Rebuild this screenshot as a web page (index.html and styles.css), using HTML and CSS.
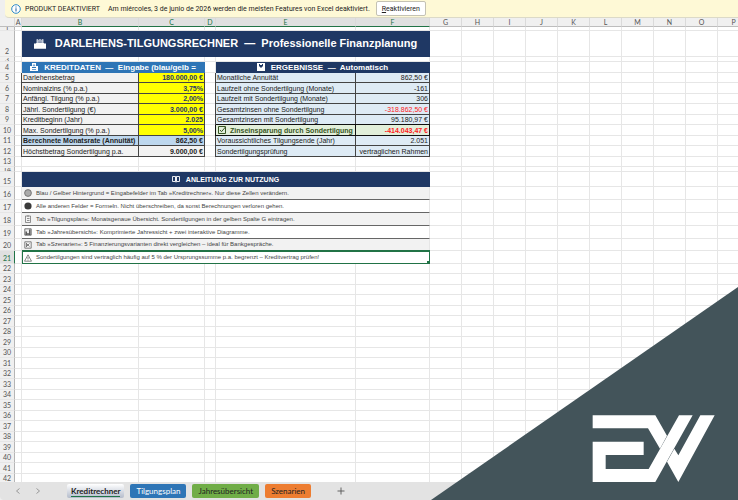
FILE: index.html
```html
<!DOCTYPE html>
<html lang="de">
<head>
  <meta charset="UTF-8">
  <meta name="viewport" content="width=device-width, initial-scale=1.0">
  <title>Darlehens-Tilgungsrechner</title>
  <link rel="stylesheet" href="styles.css">
</head>
<body>
  <div class="notice">
    <svg class="info" viewBox="0 0 10 10"><circle cx="5" cy="5" r="4.3" fill="#fff" stroke="#2b88c8" stroke-width="1"/><path d="M5 4.3v3.2M5 2.4v1.1" stroke="#2b6ca8" stroke-width="1.1"/></svg>
    <strong>PRODUKT DEAKTIVIERT</strong>
    <span>Am miércoles, 3 de junio de 2026 werden die meisten Features von Excel deaktiviert.</span>
    <button type="button"><u>R</u>eaktivieren</button>
  </div>

  <main class="sheet">
    <table id="grid">
      <colgroup id="cols">
        <col class="w-num"><col class="w-a"><col class="w-b"><col class="w-c"><col class="w-d"><col class="w-e"><col class="w-f">
      </colgroup>
      <thead>
        <tr id="letters"><th class="corner"></th><th>A</th><th class="sel">B</th><th class="sel">C</th><th class="sel">D</th><th class="sel">E</th><th class="sel">F</th></tr>
      </thead>
      <tbody>
        <tr class="h4"><th><div class="clip">1</div></th><td></td><td></td><td></td><td></td><td></td><td></td></tr>
        <tr class="h26"><th class="low">2</th><td></td>
          <td colspan="5" class="title"><div class="line">
            <svg class="icon-lg" viewBox="0 0 14 12"><path d="M0 6h2l1-1h8l1 1h2v6H0z" fill="#fff"/><path d="M3 1h2v1h1V1h2v1h1V1h2v4H3z" fill="#dfe5ef"/><path d="M4 3h6M5 4.4h4" stroke="#1f3864" stroke-width=".6"/></svg>
            <span>DARLEHENS-TILGUNGSRECHNER&nbsp; —&nbsp; Professionelle Finanzplanung</span>
          </div></td></tr>
        <tr class="h5"><th><div class="clip">3</div></th><td></td><td></td><td></td><td></td><td></td><td></td></tr>
        <tr class="h11"><th>4</th><td></td>
          <td colspan="2" class="head wide blue"><div class="line">
            <svg class="icon" viewBox="0 0 8 8"><path d="M0 3h2v2h4V3h2v5H0z" fill="#fff"/><path d="M2 0h4v4H2z" fill="#fff"/><path d="M4 1v2M3 2.200l1 1 1-1M2 6.500h4" fill="none" stroke="#2e75b6" stroke-width=".7"/></svg>
            <span>KREDITDATEN&nbsp; —&nbsp; Eingabe (blau/gelb =</span>
          </div></td><td></td>
          <td colspan="2" class="head wide"><div class="line">
            <svg class="icon" viewBox="0 0 8 8"><path d="M0 0h8v8H0z" fill="#fff"/><path d="M2 1h1v1h2V1h1v2L4 5 2 3z" fill="#1f3864"/></svg>
            <span>ERGEBNISSE&nbsp; —&nbsp; Automatisch</span>
          </div></td></tr>
        <tr class="h10"><th>5</th><td></td><td class="key">Darlehensbetrag</td><td class="input">180.000,00 €</td><td></td><td class="res">Monatliche Annuität</td><td class="res num">862,50 €</td></tr>
        <tr class="h11"><th>6</th><td></td><td class="key">Nominalzins (% p.a.)</td><td class="input">3,75%</td><td></td><td class="res">Laufzeit ohne Sondertilgung (Monate)</td><td class="res num">-161</td></tr>
        <tr class="h10"><th>7</th><td></td><td class="key">Anfängl. Tilgung (% p.a.)</td><td class="input">2,00%</td><td></td><td class="res">Laufzeit mit Sondertilgung (Monate)</td><td class="res num">306</td></tr>
        <tr class="h11"><th>8</th><td></td><td class="key">Jährl. Sondertilgung (€)</td><td class="input">3.000,00 €</td><td></td><td class="res">Gesamtzinsen ohne Sondertilgung</td><td class="res num neg">-318.862,50 €</td></tr>
        <tr class="h10"><th>9</th><td></td><td class="key">Kreditbeginn (Jahr)</td><td class="input">2.025</td><td></td><td class="res">Gesamtzinsen mit Sondertilgung</td><td class="res num">95.180,97 €</td></tr>
        <tr class="h11"><th>10</th><td></td><td class="key">Max. Sondertilgung (% p.a.)</td><td class="input">5,00%</td><td></td>
          <td class="saving"><div class="line">
            <svg class="icon" viewBox="0 0 8 8"><path d="M.5.500h7v7h-7zM2 4l1.500 1.700L7.500 1" fill="none" stroke="#375623" stroke-width="1"/></svg>
            <span>Zinseinsparung durch Sondertilgung</span>
          </div></td><td class="saving num neg">-414.043,47 €</td></tr>
        <tr class="h10"><th>11</th><td></td><td class="key rate">Berechnete Monatsrate (Annuität)</td><td class="key rate num">862,50 €</td><td></td><td class="res">Voraussichtliches Tilgungsende (Jahr)</td><td class="res num">2.051</td></tr>
        <tr class="h11"><th>12</th><td></td><td class="key">Höchstbetrag Sondertilgung p.a.</td><td class="key num strong">9.000,00 €</td><td></td><td class="res">Sondertilgungsprüfung</td><td class="res num">vertraglichen Rahmen</td></tr>
        <tr class="h10"><th>13</th><td></td><td></td><td></td><td></td><td></td><td></td></tr>
        <tr class="h5"><th><div class="clip">14</div></th><td></td><td></td><td></td><td></td><td></td><td></td></tr>
        <tr class="h15"><th class="low">15</th><td></td>
          <td colspan="5" class="head"><div class="line">
            <svg class="icon" viewBox="0 0 8 8"><path d="M.5 1.500h3v5h-3zM4.500 1.500h3v5h-3zM4 1.500v6" fill="none" stroke="#fff" stroke-width=".9"/></svg>
            <span>ANLEITUNG ZUR NUTZUNG</span>
          </div></td></tr>
        <tr class="h13"><th class="low">16</th><td></td><td colspan="5" class="hint shade"><div class="line">
          <svg class="icon" viewBox="0 0 8 8"><circle cx="4" cy="4" r="3.400" fill="#aaa" stroke="#666" stroke-width=".8"/></svg>
          <span>Blau / Gelber Hintergrund = Eingabefelder im Tab »Kreditrechner«. Nur diese Zellen verändern.</span></div></td></tr>
        <tr class="h13"><th class="low">17</th><td></td><td colspan="5" class="hint"><div class="line">
          <svg class="icon" viewBox="0 0 8 8"><circle cx="4" cy="4" r="3.600" fill="#3a3a3a"/></svg>
          <span>Alle anderen Felder = Formeln. Nicht überschreiben, da sonst Berechnungen verloren gehen.</span></div></td></tr>
        <tr class="h13"><th class="low">18</th><td></td><td colspan="5" class="hint shade"><div class="line">
          <svg class="icon" viewBox="0 0 8 8"><path d="M1.500 1h5v6.500h-5zM3 1h2M3 3.500h2.500M3 5.500h2.500" fill="none" stroke="#777" stroke-width=".8"/></svg>
          <span>Tab »Tilgungsplan«: Monatsgenaue Übersicht. Sondertilgungen in der gelben Spalte G eintragen.</span></div></td></tr>
        <tr class="h13"><th class="low">19</th><td></td><td colspan="5" class="hint"><div class="line">
          <svg class="icon" viewBox="0 0 8 8"><path d="M.8.800h6.400v6.400H.8z" fill="#eee" stroke="#555" stroke-width=".8"/><path d="M2.200 7V3.500M4 7V5M5.800 7V1.500" stroke="#444" stroke-width="1.300"/></svg>
          <span>Tab »Jahresübersicht«: Komprimierte Jahressicht + zwei interaktive Diagramme.</span></div></td></tr>
        <tr class="h12"><th class="low">20</th><td></td><td colspan="5" class="hint shade"><div class="line">
          <svg class="icon" viewBox="0 0 8 8"><path d="M.8.800h6.400v6.400H.8zM2.500 2.500l3 3M5.500 2.500l-3 3M2.500 2v4" fill="none" stroke="#666" stroke-width=".8"/></svg>
          <span>Tab »Szenarien«: 5 Finanzierungsvarianten direkt vergleichen – ideal für Bankgespräche.</span></div></td></tr>
        <tr class="h13"><th class="low sel">21</th><td></td><td colspan="5" class="hint active"><div class="line">
          <svg class="icon" viewBox="0 0 8 8"><path d="M4 .8L7.500 7.200h-7zM4 3v2.200M4 5.700v.8" fill="none" stroke="#555" stroke-width=".7"/></svg>
          <span>Sondertilgungen sind vertraglich häufig auf 5 % der Ursprungssumme p.a. begrenzt – Kreditvertrag prüfen!</span></div></td></tr>
      </tbody>
    </table>
  </main>

  <nav class="tabs">
    <button type="button" class="arrow" aria-label="Zurück"><svg viewBox="0 0 6 8"><path d="M4.500 1.500L1.500 4l3 2.500" fill="none" stroke="#999"/></svg></button>
    <button type="button" class="arrow" aria-label="Weiter"><svg viewBox="0 0 6 8"><path d="M1.500 1.500l3 2.500-3 2.500" fill="none" stroke="#999"/></svg></button>
    <button type="button" class="tab current"><span>Kreditrechner</span></button>
    <button type="button" class="tab plan">Tilgungsplan</button>
    <button type="button" class="tab year">Jahresübersicht</button>
    <button type="button" class="tab scen">Szenarien</button>
    <button type="button" class="add" aria-label="Neues Blatt"><svg viewBox="0 0 8 8"><path d="M4 .5v7M.5 4h7" stroke="#555" stroke-width=".9"/></svg></button>
  </nav>

  <svg class="brand" viewBox="0 0 307 213">
    <path d="M307 0v213H0z" fill="#43545a"/>
    <g transform="translate(139 103) scale(.33333)" fill="#fff">
      <path d="M68 76H256L291 137 270 176 234 115H68z"/>
      <path d="M68 155H221V195H107V237H236L327 76H368L256 276H68z"/>
      <path d="M391 76H434L325 276 291 215 313 176 325 196z"/>
    </g>
  </svg>

  <script>
    const sheet = document.querySelector(".sheet");
    const grid = document.getElementById("grid");
    const body = grid.tBodies[0];

    // free columns from G on, as many as the window shows
    const count = Math.min(20, Math.max(0, Math.ceil((sheet.clientWidth - 430) / 32)));
    for (let i = 0; i < count; i++) {
      const col = document.createElement("col");
      col.className = "w-rest";
      document.getElementById("cols").appendChild(col);
      const th = document.createElement("th");
      th.textContent = String.fromCharCode(71 + i);
      document.getElementById("letters").appendChild(th);
    }

    for (const row of body.rows) {
      for (let i = 0; i < count; i++) row.insertCell();
    }

    // blank rows below the calculator
    for (let n = 22; grid.offsetHeight < sheet.clientHeight; n++) {
      const row = body.insertRow();
      row.className = n % 2 ? "h11" : "h10";
      row.innerHTML = "<th>" + n + "</th>" + "<td></td>".repeat(6 + count);
    }
  </script>
</body>
</html>
```
FILE: styles.css
```css
* {
  box-sizing: border-box;
}

body {
  margin: 0;
  height: 100vh;
  display: flex;
  flex-direction: column;
  overflow: hidden;
  position: relative;
  background: #efefef;
  font-family: "Liberation Sans", Arial, sans-serif;
  font-size: 7px;
  color: #222;
}

button {
  border: none;
  margin: 0;
  padding: 0;
  background: none;
  font: inherit;
  color: inherit;
  cursor: pointer;
}

svg {
  display: block;
  flex: none;
}

/* notice bar */
.notice {
  flex: none;
  display: flex;
  align-items: center;
  gap: 6px;
  height: 18px;
  margin-left: 5px;
  padding-left: 6px;
  background: #fef9d6;
  border-bottom: 1px solid #dcdac8;
  border-bottom-left-radius: 4px;
  font-family: Roboto, "Open Sans", sans-serif;
  font-size: 7px;
  white-space: nowrap;
}

.notice strong {
  margin-right: 2px;
  margin-left: -2px;
  font-weight: 400;
}

.notice button {
  height: 15px;
  padding: 0 5px;
  background: #fff;
  border: 1px solid #c4c2b4;
  border-radius: 2px;
}

.info {
  width: 10px;
  height: 10px;
}

/* grid */
.sheet {
  flex: 1;
  min-height: 0;
  overflow: hidden;
  background: #fff;
}

#grid {
  width: 100%;
  table-layout: fixed;
  border-collapse: separate;
  border-spacing: 0;
}

.w-num { width: 15px; }
.w-a { width: 7px; }
.w-b { width: 117px; }
.w-c { width: 66px; }
.w-d { width: 11px; }
.w-e { width: 140px; }
.w-f { width: 74px; }
.w-rest { width: 32px; }

th,
td {
  padding: 0;
  border-right: 1px solid #e6e6e6;
  border-bottom: 1px solid #e6e6e6;
  line-height: 9px;
  white-space: nowrap;
  overflow: hidden;
}

th {
  background: #f0f0f0;
  border-right-color: #b5b5b5;
  font-family: Lato, "Open Sans", sans-serif;
  font-weight: 400;
  color: #555;
  text-align: center;
}

thead th {
  height: 9px;
  line-height: 8px;
  border-right-color: #dadada;
  border-bottom-color: #bdbdbd;
}

th.sel {
  background: #e0e0e0;
  color: #217346;
}

thead .sel {
  border-bottom-color: #217346;
}

tbody .sel {
  border-right-color: #217346;
}

.low {
  vertical-align: bottom;
}

.clip {
  height: 3px;
  line-height: 3px;
  overflow: hidden;
}

.h4 > * { height: 4px; line-height: 3px; }
.h5 > * { height: 5px; line-height: 4px; }
.h10 > * { height: 10px; }
.h11 > * { height: 11px; }
.h12 > * { height: 12px; }
.h13 > * { height: 13px; }
.h15 > * { height: 15px; }
.h26 > * { height: 26px; }

.line {
  display: flex;
  align-items: center;
}

.icon {
  width: 8px;
  height: 8px;
}

.icon-lg {
  width: 12px;
  height: 11px;
}

.title,
.head {
  background: #1f3864;
  border-color: #1f3864;
  color: #fff;
  font-weight: 700;
}

.title .line {
  justify-content: center;
  gap: 9px;
  font-size: 11px;
}

.head .line {
  justify-content: center;
  gap: 6px;
}

.head.wide {
  font-size: 8px;
}

.head.blue {
  background: #2e75b6;
  border-color: #2e75b6;
}

.key,
.input,
.res,
.saving {
  padding: 0 1px;
  border-color: #444;
  box-shadow: -1px 0 0 #444;
}

.key {
  background: #f2f2f2;
}

.input {
  background: #ff0;
  color: #1f3864;
  font-weight: 700;
  text-align: right;
}

.res {
  background: #deebf5;
}

.num {
  text-align: right;
}

.rate {
  background: #bdd7ee;
}

.rate,
.strong {
  font-weight: 700;
}

.saving {
  background: #e2efda;
  border-color: #111;
  box-shadow: -1px 0 0 #111, 0 -1px 0 #111;
  color: #375623;
  font-weight: 700;
}

.saving .line {
  gap: 4px;
  padding-left: 1px;
}

.neg {
  color: #f22;
}

.hint {
  padding-left: 2px;
  border-color: #666;
  border-right-color: #e6e6e6;
  font-size: 6px;
  color: #444;
}

.hint .line {
  gap: 4px;
}

.shade {
  background: #f2f2f2;
}

.active {
  position: relative;
  border: 1px solid #217346;
  padding-left: 1px;
  box-shadow: 0 -1px 0 #217346;
}

/* fill handle of the selected cell */
.active::after {
  content: "";
  position: absolute;
  right: 0;
  bottom: 0;
  width: 2px;
  height: 2px;
  background: #217346;
}

/* sheet tabs */
.tabs {
  flex: none;
  display: flex;
  align-items: center;
  gap: 6px;
  height: 18px;
  padding-left: 15px;
  background: #e3e3e3;
  border-bottom-left-radius: 4px;
  font-family: Lato, "Open Sans", sans-serif;
  font-size: 8px;
}

.arrow {
  width: 6px;
  margin-right: 8px;
}

.arrow + .tab {
  margin-left: 12px;
}

.tab {
  height: 14px;
  padding: 0 6px;
  border-radius: 2px;
}

.current {
  padding: 0 4px;
  background: linear-gradient(#fff, #b4bccb);
  font-weight: 700;
}

.current span {
  display: block;
  border-bottom: 1px solid #217346;
}

.plan {
  background: #2e75b6;
  color: #fff;
}

.year {
  background: #70ad47;
}

.scen {
  background: #ed7d31;
}

.add {
  width: 8px;
  margin-left: 20px;
}

/* logo corner lies over the sheet */
.brand {
  position: absolute;
  right: 0;
  bottom: 0;
  width: 307px;
  height: 213px;
}
```
